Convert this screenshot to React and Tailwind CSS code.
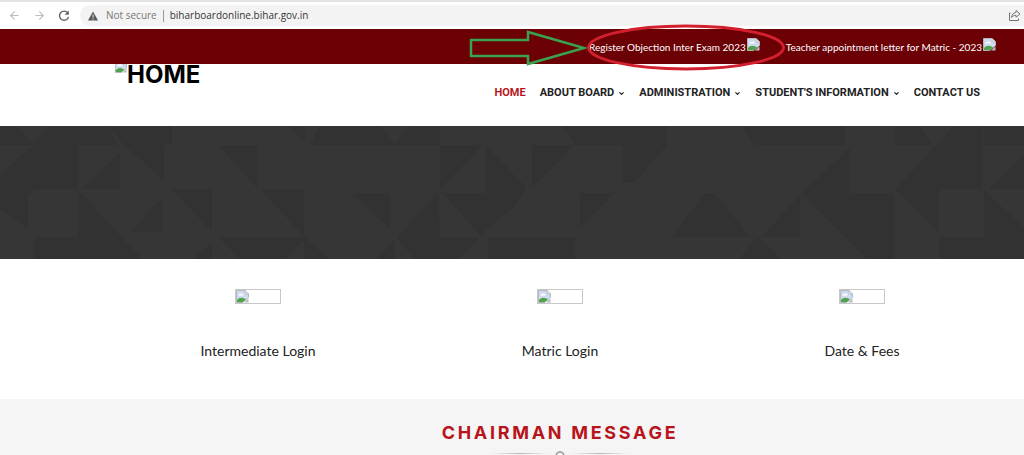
import { FiArrowLeft, FiArrowRight } from 'react-icons/fi';
import { ChevronDown } from 'lucide-react';

const topLinks = [
  'Register Objection Inter Exam 2023',
  'Teacher appointment letter for Matric - 2023',
];

const menu = [
  { label: 'HOME', active: true },
  { label: 'ABOUT BOARD', sub: true },
  { label: 'ADMINISTRATION', sub: true },
  { label: "STUDENT'S INFORMATION", sub: true },
  { label: 'CONTACT US' },
];

const cards = ['Intermediate Login', 'Matric Login', 'Date & Fees'];

// Dark triangles of the banner pattern
const shapes = [
  '0,0 17,0 33,19 0,19',
  '48,0 78,0 78,63 35,63 28,70 28,103 0,82 0,49 33,19',
  '78,0 108,0 118,19 78,19',
  '108,0 172,0 172,19 164,19 164,54 124,19',
  '120,26 120,63 82,63',
  '78,64 78,111 34,111 34,133 142,133',
  '163,71 163,106 130,106',
  '172,63 212,63 212,106',
  '218,19 258,19 258,63',
  '260,63 304,63 304,110',
  '218,111 305,111 328,133 304,133 304,114 285,133 240,133',
  '212,116 212,133 193,133',
  '288,0 305,0 305,16',
  '320,0 380,0 395,18 410,0 440,0 440,19 310,19',
  '352,67 390,67 390,104',
  '438,67 440,111 479,111 460,133 414,133 397,111',
  '395,114 395,133 377,133',
  '440,19 483,19 440,63',
  '443,67 485,67 485,19 512,47 527,62 512,82 480,109',
  '488,111 575,111 575,133 488,133',
  '562,0 667,0 667,19 634,57 623,57 623,19 575,19',
  '532,19 574,19 532,62',
  '580,67 614,67 580,102',
  '705,67 714,67 750,111 672,111',
  '742,0 845,0 845,19 754,19',
  '850,22 850,67 894,67 894,133 867,133 802,67',
  '800,69 800,111 762,111',
  '757,111 782,133 739,133',
  '954,0 982,0 982,63 939,63 939,106 895,64',
  '894,0 920,0 932,19 894,19',
  '984,0 1024,0 1024,19 984,19',
  '1024,29 1024,63 989,63',
  '984,64 1024,102 1024,133 939,133 939,111 984,111',
];

const BrokenImage = ({ className }) => (
  <svg viewBox="0 0 13 13" preserveAspectRatio="xMidYMax slice" className={className} aria-hidden="true">
    <path d="M0.5 0.5H9L12.5 4V7.5L6.5 12.5H0.5Z" fill="#cfdcf0" stroke="#b4b8c0" />
    <path d="M2.5 5.5C2.5 4 4 3.5 5 4C6 3 8 4 7.5 5.5Z" fill="#fff" />
    <path d="M1 12V10C3 7.500 5.500 7 8.500 8.500L10 9.500L6.500 12.200Z" fill="#4fa34b" />
    <path d="M9 0.500V4H12.500Z" fill="#f4f4f4" stroke="#b4b8c0" strokeWidth="0.800" />
    <path d="M12.500 8.500V12.500H8Z" fill="#b9bdc4" />
  </svg>
);

const BrowserBar = () => (
  <div className="h-[29px] border-t-2 border-[#e3e3e3] bg-white flex items-center text-[#5f6368]">
    <div className="flex items-center gap-3 pl-2 w-20 shrink-0">
      <button type="button" aria-label="Back" className="text-[#bdbdbd]">
        <FiArrowLeft size={13} />
      </button>
      <button type="button" aria-label="Forward" className="text-[#bdbdbd]">
        <FiArrowRight size={13} />
      </button>
      <button type="button" aria-label="Reload">
        <svg width="12" height="12" viewBox="0 0 12 12" fill="none" stroke="currentColor" strokeWidth="1.4">
          <path d="M10 3.200A4.600 4.600 0 1 0 10.600 6.800" />
          <path d="M10.800 0.500V4.700H6.600Z" fill="currentColor" stroke="none" />
        </svg>
      </button>
    </div>
    <div className="flex-1 h-[21px] rounded-l-full bg-[#f3f3f3] flex items-center pl-2 pr-[3px] font-['Open_Sans',sans-serif] text-[10px]">
      <svg width="10" height="10" viewBox="0 0 10 10" className="mr-2" aria-hidden="true">
        <path d="M5 0.500L10 9.500H0Z" fill="#55585c" />
        <path d="M5 3.500V6.500M5 7.300V8.500" stroke="#f3f3f3" />
      </svg>
      <span className="text-[#777]">Not secure</span>
      <span className="w-px h-3 bg-[#999] mx-[6px]" />
      <span className="text-[#333]">biharboardonline.bihar.gov.in</span>
      <button type="button" aria-label="Share" className="ml-auto">
        <svg width="13" height="13" viewBox="0 0 13 13" fill="none" stroke="#707478" strokeLinejoin="round">
          <path d="M2.500 4H1.500V11.500H10.500V9.500" />
          <path d="M8 1.500L12 5L8 8.200V6.400C6 6.200 4.500 7 3.500 8.500C3.800 5.500 5.500 3.700 8 3.500Z" />
        </svg>
      </button>
    </div>
  </div>
);

const App = () => {
  return (
    <div className="bg-white font-[Lato,sans-serif] text-[#222]">
      <BrowserBar />

      {/* Top links */}
      <div className="relative h-[35px] bg-[#6b0005] flex items-center justify-end gap-[26px] pr-7 pt-[2px] text-[10px] text-white">
        {topLinks.map((text) => (
          <a key={text} href="#" className="flex items-center gap-px whitespace-nowrap">
            {text}
            <BrokenImage className="w-[13px] h-[13px] mb-[6px]" />
          </a>
        ))}

        {/* Arrow and circle drawn over the first link */}
        <svg
          viewBox="0 0 316 48"
          fill="none"
          className="absolute right-[239px] -top-[6px] w-[316px] h-[48px] pointer-events-none"
          aria-hidden="true"
        >
          <path d="M2 17H59V9L115 25L59 41V33H2Z" stroke="#3aa24f" strokeWidth="2.500" />
          <ellipse cx="217" cy="24.500" rx="97.500" ry="21.500" stroke="#d3202f" strokeWidth="2.800" />
        </svg>
      </div>

      <header className="h-[62px] flex items-start justify-between pl-[115px] pr-11">
        <a href="#" className="flex items-start font-[Inter,sans-serif] font-bold text-[24px] leading-[22px] text-black">
          <BrokenImage className="w-3 h-[9px]" />
          HOME
        </a>
        <nav className="flex items-center gap-[14px] pt-[21px] font-[Roboto,sans-serif] text-[11px] leading-4 font-bold">
          {menu.map((item) => (
            <a
              key={item.label}
              href="#"
              className={`flex items-center gap-1 whitespace-nowrap ${item.active ? 'text-[#b8141c]' : 'text-[#222]'}`}
            >
              {item.label}
              {item.sub && <ChevronDown size={7} strokeWidth={4} />}
            </a>
          ))}
        </nav>
      </header>

      {/* Banner */}
      <div className="h-[133px] bg-[#363636]">
        <svg viewBox="0 0 1024 133" preserveAspectRatio="xMidYMid slice" className="w-full h-full" aria-hidden="true">
          {shapes.map((points) => (
            <polygon key={points} points={points} fill="#323232" />
          ))}
        </svg>
      </div>

      <section className="grid grid-cols-3 pl-[107px] pr-[11px] pt-[30px] pb-[38px]">
        {cards.map((title) => (
          <a key={title} href="#" className="flex flex-col items-center gap-9">
            <span className="w-[46px] h-[15px] border border-[#c8c8c8] flex items-center">
              <BrokenImage className="w-[13px] h-[13px]" />
            </span>
            <span className="text-[14px] leading-[21px]">{title}</span>
          </a>
        ))}
      </section>

      <section className="bg-[#f5f5f5] pl-[107px] pr-[11px] pt-[22px] flex flex-col items-center">
        <h2 className="font-[Inter,sans-serif] font-bold text-[18px] leading-6 tracking-[0.15em] text-[#b8141c]">
          CHAIRMAN MESSAGE
        </h2>
        <svg width="140" height="10" viewBox="0 0 140 10" className="block" aria-hidden="true">
          <defs>
            <linearGradient id="fade">
              <stop offset="0" stopColor="#c4c4c4" stopOpacity="0" />
              <stop offset="0.5" stopColor="#b4b4b4" />
              <stop offset="1" stopColor="#c4c4c4" stopOpacity="0" />
            </linearGradient>
          </defs>
          <rect x="0" y="8" width="60" height="1" fill="url(#fade)" />
          <rect x="80" y="8" width="60" height="1" fill="url(#fade)" />
          <circle cx="70" cy="11" r="4" fill="none" stroke="#999" strokeWidth="1.500" />
        </svg>
      </section>
    </div>
  );
};

export default App;
